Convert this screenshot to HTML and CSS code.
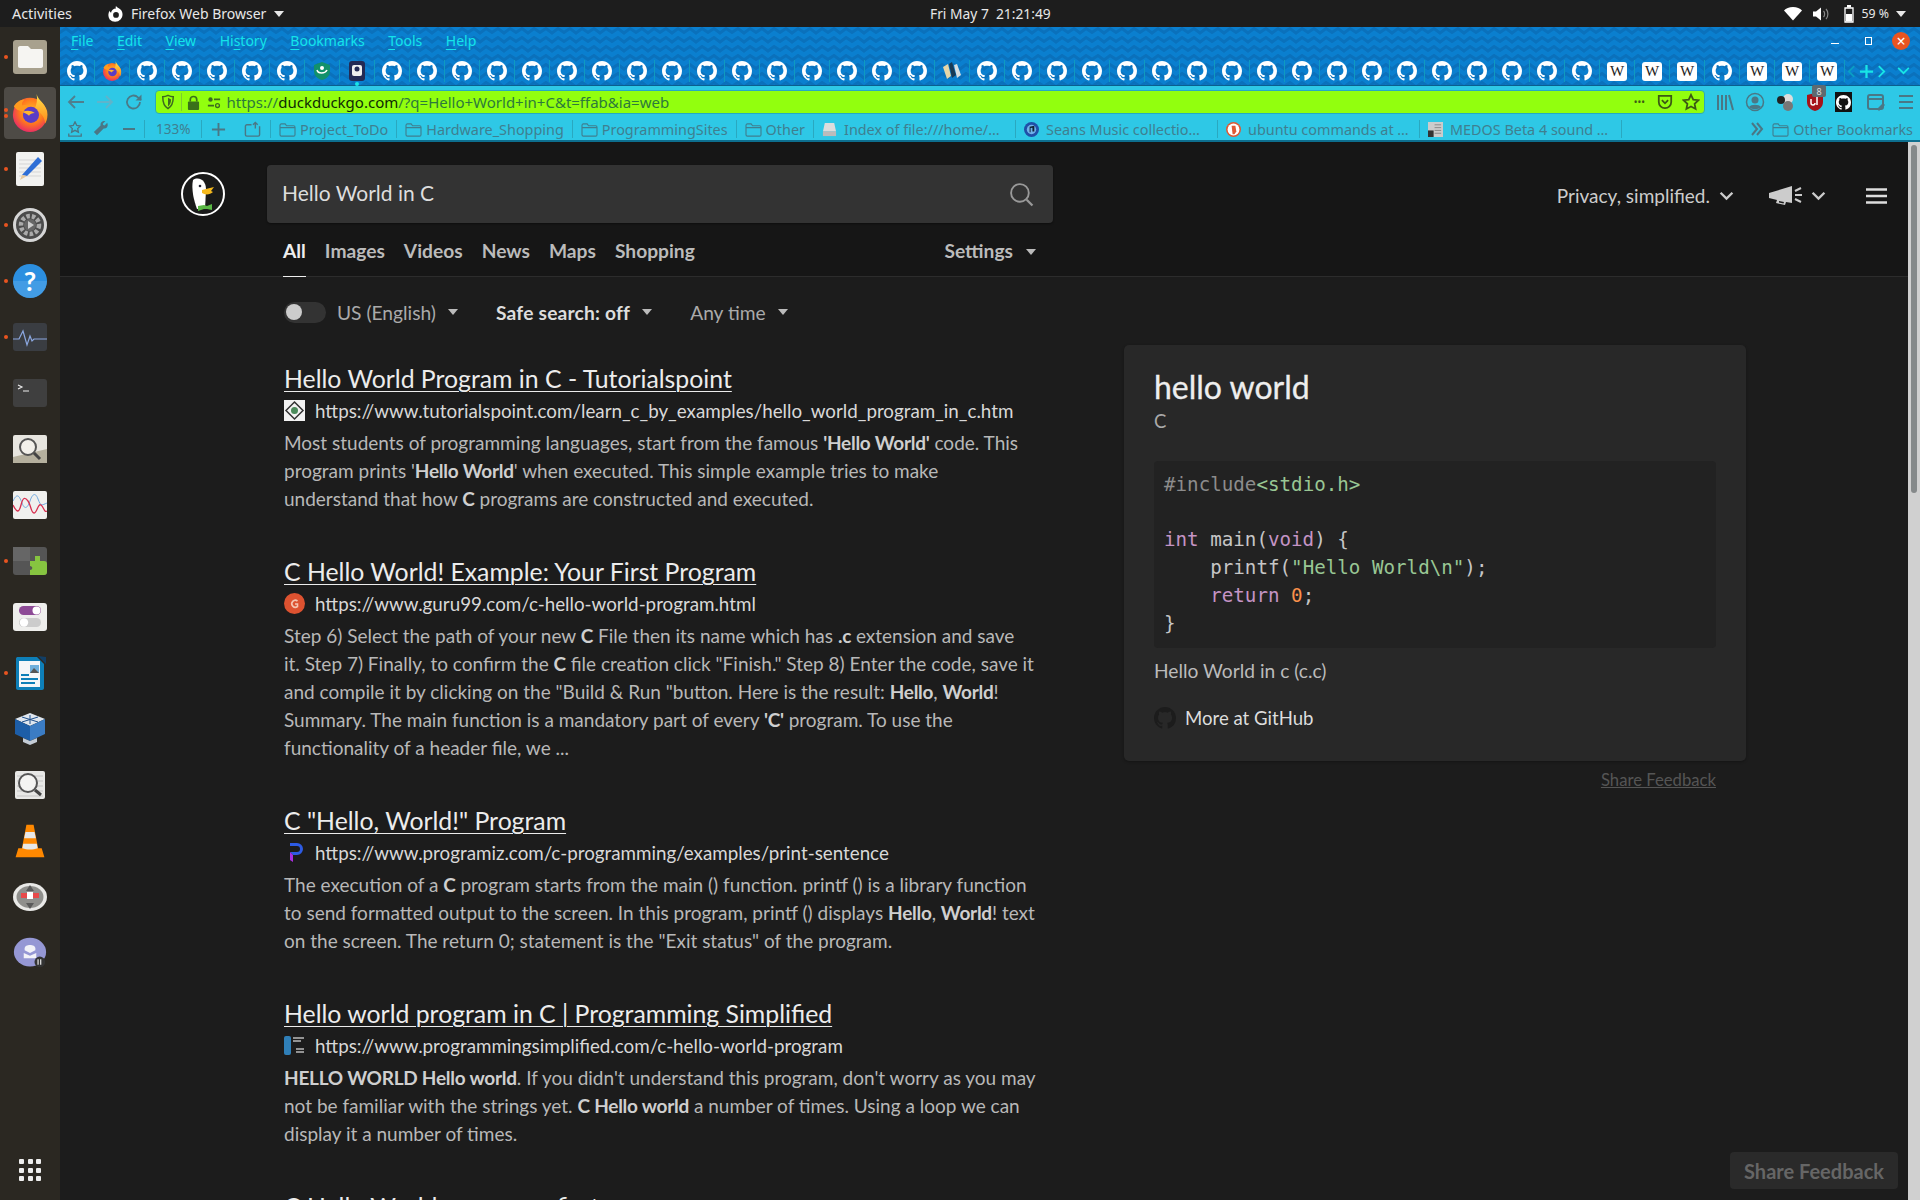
FILE: index.html
```html
<!DOCTYPE html>
<html lang="en">
<head>
<meta charset="utf-8">
<title>Hello World in C at DuckDuckGo</title>
<link rel="stylesheet" href="styles.css">
</head>
<body>
<svg class="defs" width="0" height="0" aria-hidden="true">
  <defs>
    <radialGradient id="ffg" cx="0.55" cy="0.4" r="0.7"><stop offset="0" stop-color="#ffbd2e"/><stop offset="0.5" stop-color="#ff7a1c"/><stop offset="1" stop-color="#e3127d"/></radialGradient>
    <linearGradient id="ffl" x1="0" y1="0" x2="0" y2="1"><stop offset="0" stop-color="#ffe14a"/><stop offset="1" stop-color="#ff8a1a"/></linearGradient>
    <symbol id="gh" viewBox="0 0 16 16"><path fill="currentColor" d="M8 0C3.58 0 0 3.58 0 8c0 3.54 2.29 6.53 5.47 7.59.4.07.55-.17.55-.38 0-.19-.01-.82-.01-1.49-2.01.37-2.53-.49-2.69-.94-.09-.23-.48-.94-.82-1.13-.28-.15-.68-.52-.01-.53.63-.01 1.08.58 1.23.82.72 1.21 1.87.87 2.33.66.07-.52.28-.87.51-1.07-1.78-.2-3.64-.89-3.64-3.95 0-.87.31-1.59.82-2.15-.08-.2-.36-1.02.08-2.12 0 0 .67-.21 2.2.82.64-.18 1.32-.27 2-.27.68 0 1.36.09 2 .27 1.53-1.04 2.2-.82 2.2-.82.44 1.1.16 1.92.08 2.12.51.56.82 1.27.82 2.15 0 3.07-1.87 3.75-3.65 3.95.29.25.54.73.54 1.48 0 1.07-.01 1.93-.01 2.2 0 .21.15.46.55.38A8.013 8.013 0 0016 8c0-4.42-3.58-8-8-8z"/></symbol>
    <symbol id="ff" viewBox="0 0 40 40"><circle cx="20" cy="22" r="18" fill="url(#ffg)"/><path d="M27 0c1 6 9 10 11 18 1 5 0 10-2 13-1-9-6-12-11-15 2-5 3-10 2-16z" fill="url(#ffl)"/><path d="M3 13c3-5 7-7 11-7-2 2-3 4-2 6 4-1 9 0 12 3l-8 3c-3 1-5 0-8-1-2 0-4-2-5-4z" fill="#ff9a1f"/><circle cx="21" cy="22" r="8.500" fill="#5b3cc4"/><path d="M12 19c4-2 9-2 13 1-3 0-5 1-6 3-2-2-5-3-7-4z" fill="#ffb52c"/></symbol>
    <symbol id="folder" viewBox="0 0 18 16"><path fill="none" stroke="currentColor" stroke-width="1.200" d="M1 3.500C1 2.700 1.600 2 2.500 2h4l1.500 2h7.500c.8 0 1.500.7 1.500 1.500v8c0 .8-.7 1.500-1.500 1.500h-13C1.700 15 1 14.300 1 13.500z M1 6h16"/></symbol>
    <symbol id="chev" viewBox="0 0 14 9"><path fill="none" stroke="currentColor" stroke-width="2.200" d="M1.500 1.500 7 7l5.500-5.500"/></symbol>
    <symbol id="caret" viewBox="0 0 10 6"><path fill="currentColor" d="M0 0h10L5 6z"/></symbol>
  </defs>
</svg>

<header class="topbar">
  <span class="top-activities">Activities</span>
  <span class="top-app">
    <svg class="top-app-ico" viewBox="0 0 20 20"><path fill="#fff" d="M10 1c1 2 3 2 5 4 3 3 3 8 0 11a8 8 0 0 1-12 0C1 13 1 9 3 6c0 1 .5 2 1.500 2.500C5 6 7 4 10 4c-.5-1-.5-2 0-3z"/><circle cx="10" cy="11" r="3.200" fill="#1d1d1d"/></svg>
    Firefox Web Browser
    <svg class="top-caret"><use href="#caret"/></svg>
  </span>
  <span class="top-clock">Fri May 7&nbsp; 21:21:49</span>
  <span class="top-status">
    <svg class="st-ico" viewBox="0 0 18 14"><path fill="#fff" d="M9 13.500 0 3.500C2 1.500 5 0 9 0s7 1.500 9 3.500z"/></svg>
    <svg class="st-ico" viewBox="0 0 18 14"><path fill="#fff" d="M1 4.500h3L9 .5v13l-5-4H1z"/><path fill="none" stroke="#888" stroke-width="1.200" d="M11.500 4c1.500 1.500 1.500 4.500 0 6M14 2c2.500 2.500 2.500 7.500 0 10"/></svg>
    <svg class="st-bat" viewBox="0 0 10 18"><path fill="none" stroke="#fff" stroke-width="1.300" d="M1 3h8v14H1z"/><path fill="#fff" d="M3 0h4v2.500H3zM2 9h6v7.500H2z"/></svg>
    <span class="st-pct">59 %</span>
    <svg class="top-caret"><use href="#caret"/></svg>
  </span>
</header>

<div class="desktop">
  <nav class="dock">
    <div class="dock-item has-dot"><svg viewBox="0 0 34 34"><rect width="34" height="34" rx="3" fill="#a8a18e"/><path fill="#f6f5f2" d="M5 8c0-1 .7-2 2-2h8l3 3h10c1.200 0 2 .800 2 2v15c0 1-.800 2-2 2H7c-1.300 0-2-1-2-2z"/></svg></div>
    <div class="dock-item active has-dot two"><svg class="dock-ff" viewBox="0 0 40 40"><use href="#ff"/></svg></div>
    <div class="dock-item has-dot"><svg viewBox="0 0 34 34"><rect x="3" width="28" height="34" rx="2" fill="#f2f2f0"/><path stroke="#d5d5d5" d="M6 8h22M6 12h22M6 16h22M6 20h22M6 24h22"/><path fill="#2f6fd6" d="M25 5l4 4-15 15-5-1z"/><path fill="#e8c99b" d="M9 23l5 1-7 4z"/></svg></div>
    <div class="dock-item has-dot"><svg viewBox="0 0 34 34"><circle cx="17" cy="17" r="15.500" fill="#4b4b4b" stroke="#d6d6d6" stroke-width="3"/><circle cx="17" cy="17" r="9" fill="none" stroke="#aaa" stroke-width="4.500" stroke-dasharray="3.500 2"/><circle cx="17" cy="17" r="6" fill="#666"/><path fill="#ccc" d="M15 13l6 4-6 4z"/></svg></div>
    <div class="dock-item has-dot"><svg viewBox="0 0 34 34"><circle cx="17" cy="17" r="17" fill="#2c8fe0"/><path fill="#58aaea" d="M0 17a17 17 0 0 0 34 0z" opacity=".5"/><text class="help-q" x="17" y="27" text-anchor="middle">?</text></svg></div>
    <div class="dock-item has-dot short"><svg viewBox="0 0 34 28"><rect width="34" height="28" rx="3" fill="#3a3d42"/><path fill="none" stroke="#8ba7e0" stroke-width="1.200" d="M0 16h6l4-8 4 14 3-9 2 5 2-2h13"/></svg></div>
    <div class="dock-item short"><svg viewBox="0 0 34 28"><rect width="34" height="28" rx="3" fill="#3f3f3f"/><path fill="none" stroke="#eee" stroke-width="1.100" d="M5 6l4 2-4 2M10 12h6"/></svg></div>
    <div class="dock-item short"><svg viewBox="0 0 34 28"><rect width="34" height="28" rx="2" fill="#e7e5df"/><path fill="#b5b09e" d="M0 22l34-8v14H0z"/><circle cx="15" cy="12" r="8" fill="#f2f0ea" stroke="#555" stroke-width="2"/><path stroke="#444" stroke-width="3" d="M21 18l6 6"/></svg></div>
    <div class="dock-item short"><svg viewBox="0 0 34 28"><rect width="34" height="28" rx="2" fill="#f0f0ee"/><path fill="none" stroke="#6ea8e0" stroke-width="1" d="M0 10c4-8 6-6 9 2s6 4 8-2 5-10 8-2 4 6 9 4"/><path fill="none" stroke="#d73050" stroke-width="1.300" d="M0 14c4 8 6 8 8 0s4-8 7-4 3 12 6 12 4-10 7-8 3 8 6 6"/></svg></div>
    <div class="dock-item has-dot short"><svg viewBox="0 0 34 28"><rect width="34" height="28" rx="3" fill="#555"/><path fill="#666" d="M0 0h17v14H0z"/><path fill="#86c440" d="M17 14h14c2 0 3 1 3 3v8c0 2-1 3-3 3H17v-5c3 0 3-4 0-4zM22 9h5v5h-5z"/></svg></div>
    <div class="dock-item short"><svg viewBox="0 0 34 28"><rect width="34" height="28" rx="3" fill="#eeeeec"/><rect x="6" y="3" width="22" height="9" rx="4.500" fill="#8d4a96"/><circle cx="23.500" cy="7.500" r="4" fill="#fff"/><rect x="6" y="15" width="22" height="9" rx="4.500" fill="#ccc"/><circle cx="11" cy="19.500" r="4.200" fill="#fff"/></svg></div>
    <div class="dock-item has-dot"><svg viewBox="0 0 34 34"><path fill="#0e7fb8" d="M3 3c0-1.500.8-2 2-2h19l7 7v24c0 1-.800 2-2 2H5c-1.200 0-2-1-2-2z"/><path fill="#123f66" d="M25 0l8 1v7z"/><rect x="6" y="5" width="21" height="26" fill="#f4f6f8"/><path stroke="#0e7fb8" stroke-width="1.800" d="M8 19h8M8 23h17M8 27h14"/><rect x="17" y="9" width="9" height="8" fill="#6fb0dc"/><path fill="#555" d="M17 17l4-5 5 5z"/></svg></div>
    <div class="dock-item"><svg viewBox="0 0 34 34"><path fill="#dfe6ef" d="M17 1l15 6-15 7L2 7z"/><path fill="#1d5ea8" d="M2 7l15 7v15L2 22z"/><path fill="#3b7cc4" d="M32 7l-15 7v15l15-7z"/><path fill="#c4ccd6" d="M10 26l7 3 7-3v4l-7 3-7-3z"/><path stroke="#1d4f8c" d="M17 3v9M9 5l16 5M25 5L9 10"/></svg></div>
    <div class="dock-item short"><svg viewBox="0 0 34 28"><rect x="2" width="30" height="28" rx="2" fill="#e8e8e6"/><path stroke="#c4c4c4" d="M4 5h26M4 10h26M4 15h26M4 20h26M4 25h26"/><circle cx="15" cy="12" r="9" fill="#f4f4f2" stroke="#555" stroke-width="2"/><path stroke="#444" stroke-width="3" d="M22 19l6 5"/></svg></div>
    <div class="dock-item dock-cone"><svg viewBox="0 0 34 40"><path fill="#ff8800" d="M13 2h8l5 26h4l3 10H1l3-10h4z"/><path fill="#e8e8e8" d="M12 10h10l1.500 7h-13zM9.500 23h15l1 5c-5 2-12 2-17 0z"/></svg></div>
    <div class="dock-item short"><svg viewBox="0 0 34 28"><ellipse cx="17" cy="14" rx="17" ry="14" fill="#e9e9e7"/><ellipse cx="17" cy="14" rx="13.500" ry="11" fill="#8f8f8c"/><path fill="#5a5a5a" d="M17 2l4 6h-8zM17 26l4-6h-8z"/><rect x="8" y="10" width="18" height="5" fill="#e84a4a"/><rect x="14" y="9" width="6" height="7" fill="#fff"/></svg></div>
    <div class="dock-item"><svg viewBox="0 0 38 34"><ellipse cx="19" cy="16" rx="18" ry="16" fill="#9597d4"/><path fill="#f2f2f8" d="M13 12c0-3 3-4 6-4s6 1 6 4v2l-6 3-6-3z"/><path fill="#f2f2f8" d="M12 17l7 3 7-3v6H12z"/><circle cx="30" cy="27" r="6" fill="#333"/><path stroke="#fff" stroke-width="1.200" d="M28 24v6M31 24v6"/></svg></div>
    <div class="dock-grid"><i></i><i></i><i></i><i></i><i></i><i></i><i></i><i></i><i></i></div>
  </nav>

  <main class="browser">
    <div class="chrome-top">
      <div class="menubar">
        <span class="menu"><u>F</u>ile</span>
        <span class="menu"><u>E</u>dit</span>
        <span class="menu"><u>V</u>iew</span>
        <span class="menu">Hi<u>s</u>tory</span>
        <span class="menu"><u>B</u>ookmarks</span>
        <span class="menu"><u>T</u>ools</span>
        <span class="menu"><u>H</u>elp</span>
        <span class="win-ctrls">
          <i class="win-min"></i>
          <i class="win-max"></i>
          <span class="win-close">×</span>
        </span>
      </div>
      <div class="tabbar">
        <div class="tab"><svg class="tg"><use href="#gh"/></svg></div>
        <div class="tab"><svg class="tg" viewBox="0 0 40 40"><use href="#ff"/></svg></div>
        <div class="tab"><svg class="tg"><use href="#gh"/></svg></div>
        <div class="tab"><svg class="tg"><use href="#gh"/></svg></div>
        <div class="tab"><svg class="tg"><use href="#gh"/></svg></div>
        <div class="tab"><svg class="tg"><use href="#gh"/></svg></div>
        <div class="tab"><svg class="tg"><use href="#gh"/></svg></div>
        <div class="tab"><svg class="tg" viewBox="0 0 20 20"><path fill="#12916b" d="M10 1l8 3v6c0 5-4 8-8 9-4-1-8-4-8-9V4z"/><circle cx="10" cy="7" r="2" fill="#fff"/><path fill="none" stroke="#fff" stroke-width="1.500" d="M5 9c1 4 8 4 10 0"/></svg></div>
        <div class="tab tab-current"><svg class="tg" viewBox="0 0 20 20"><rect x="2" width="16" height="20" rx="3" fill="#232a54"/><rect x="5" y="4" width="10" height="11" rx="2" fill="#eee"/><circle cx="10" cy="8" r="2.500" fill="#232a54"/></svg></div>
        <div class="tab"><svg class="tg"><use href="#gh"/></svg></div>
        <div class="tab"><svg class="tg"><use href="#gh"/></svg></div>
        <div class="tab"><svg class="tg"><use href="#gh"/></svg></div>
        <div class="tab"><svg class="tg"><use href="#gh"/></svg></div>
        <div class="tab"><svg class="tg"><use href="#gh"/></svg></div>
        <div class="tab"><svg class="tg"><use href="#gh"/></svg></div>
        <div class="tab"><svg class="tg"><use href="#gh"/></svg></div>
        <div class="tab"><svg class="tg"><use href="#gh"/></svg></div>
        <div class="tab"><svg class="tg"><use href="#gh"/></svg></div>
        <div class="tab"><svg class="tg"><use href="#gh"/></svg></div>
        <div class="tab"><svg class="tg"><use href="#gh"/></svg></div>
        <div class="tab"><svg class="tg"><use href="#gh"/></svg></div>
        <div class="tab"><svg class="tg"><use href="#gh"/></svg></div>
        <div class="tab"><svg class="tg"><use href="#gh"/></svg></div>
        <div class="tab"><svg class="tg"><use href="#gh"/></svg></div>
        <div class="tab"><svg class="tg"><use href="#gh"/></svg></div>
        <div class="tab"><svg class="tg" viewBox="0 0 20 20"><path fill="#e6d6a8" d="M1 6l5-3 3 12-4 3z"/><path fill="#1a3a55" d="M7 3l3-2 4 13-4 3z"/><path fill="#d8dde0" d="M12 4l3-1 4 11-4 3z"/></svg></div>
        <div class="tab"><svg class="tg"><use href="#gh"/></svg></div>
        <div class="tab"><svg class="tg"><use href="#gh"/></svg></div>
        <div class="tab"><svg class="tg"><use href="#gh"/></svg></div>
        <div class="tab"><svg class="tg"><use href="#gh"/></svg></div>
        <div class="tab"><svg class="tg"><use href="#gh"/></svg></div>
        <div class="tab"><svg class="tg"><use href="#gh"/></svg></div>
        <div class="tab"><svg class="tg"><use href="#gh"/></svg></div>
        <div class="tab"><svg class="tg"><use href="#gh"/></svg></div>
        <div class="tab"><svg class="tg"><use href="#gh"/></svg></div>
        <div class="tab"><svg class="tg"><use href="#gh"/></svg></div>
        <div class="tab"><svg class="tg"><use href="#gh"/></svg></div>
        <div class="tab"><svg class="tg"><use href="#gh"/></svg></div>
        <div class="tab"><svg class="tg"><use href="#gh"/></svg></div>
        <div class="tab"><svg class="tg"><use href="#gh"/></svg></div>
        <div class="tab"><svg class="tg"><use href="#gh"/></svg></div>
        <div class="tab"><svg class="tg"><use href="#gh"/></svg></div>
        <div class="tab"><svg class="tg"><use href="#gh"/></svg></div>
        <div class="tab"><svg class="tg"><use href="#gh"/></svg></div>
        <div class="tab"><span class="wiki">W</span></div>
        <div class="tab"><span class="wiki">W</span></div>
        <div class="tab"><span class="wiki">W</span></div>
        <div class="tab"><svg class="tg"><use href="#gh"/></svg></div>
        <div class="tab"><span class="wiki">W</span></div>
        <div class="tab"><span class="wiki">W</span></div>
        <div class="tab"><span class="wiki">W</span></div>
        <div class="tab-ctrls">
          <svg viewBox="0 0 10 16" class="tc-n"><path fill="none" stroke="#0a9fc4" stroke-width="2" d="M8 2 2 8l6 6"/></svg>
          <svg viewBox="0 0 16 16" class="tc-p"><path fill="none" stroke="#18e6e6" stroke-width="2.400" d="M8 1v14M1 8h14"/></svg>
          <svg viewBox="0 0 10 16" class="tc-n"><path fill="none" stroke="#18e6e6" stroke-width="2" d="M2 2l6 6-6 6"/></svg>
          <svg viewBox="0 0 14 9" class="tc-d"><path fill="none" stroke="#18e6e6" stroke-width="2" d="M1 1l6 6 6-6"/></svg>
        </div>
      </div>
    </div>

    <div class="navbar">
      <div class="nav-btns">
        <svg class="nb" viewBox="0 0 18 18"><path fill="none" stroke="#4f7f8e" stroke-width="1.800" d="M17 9H2M8 3 2 9l6 6"/></svg>
        <svg class="nb" viewBox="0 0 18 18"><path fill="none" stroke="#5fb4cb" stroke-width="1.800" d="M1 9h15M10 3l6 6-6 6"/></svg>
        <svg class="nb" viewBox="0 0 18 18"><path fill="none" stroke="#4a7a88" stroke-width="1.800" d="M15 9a6.500 6.500 0 1 1-2-4.700L16 7"/><path fill="#4a7a88" d="M16.500 1.500v6h-6z"/></svg>
      </div>
      <div class="urlbar">
        <svg class="ub-shield" viewBox="0 0 16 18"><path fill="none" stroke="#3d6a1f" stroke-width="1.700" d="M8 1.500c2 1 4 1.500 6 1.500 0 7-1.500 11-6 13.500C3.500 14 2 10 2 3c2 0 4-.5 6-1.500z"/><path fill="#3d6a1f" d="M8 4v10c2-1.500 3.500-4 3.500-8z"/></svg>
        <i class="ub-sep"></i>
        <svg class="ub-lock" viewBox="0 0 14 16"><path fill="none" stroke="#39701a" stroke-width="1.800" d="M3.500 7V5a3.500 3.500 0 0 1 7 0v2"/><rect x="1" y="7" width="12" height="9" rx="1" fill="#39701a"/></svg>
        <svg class="ub-perm" viewBox="0 0 16 14"><circle cx="4" cy="3.500" r="2.500" fill="#3d6a1f"/><path stroke="#3d6a1f" stroke-width="2" d="M8 3.500h7M1 10.500h7"/><circle cx="12" cy="10.500" r="2.200" fill="none" stroke="#3d6a1f" stroke-width="1.500"/></svg>
        <span class="url"><span class="url-dim">https://</span>duckduckgo.com<span class="url-dim">/?q=Hello+World+in+C&amp;t=ffab&amp;ia=web</span></span>
        <span class="ub-dots">•••</span>
        <svg class="ub-pocket" viewBox="0 0 18 18"><path fill="none" stroke="#3c5a14" stroke-width="2" d="M2 2h14v7a7 7 0 0 1-14 0z"/><path fill="none" stroke="#3c5a14" stroke-width="2" d="M5.500 7 9 10.500 12.500 7"/></svg>
        <svg class="ub-star" viewBox="0 0 20 20"><path fill="none" stroke="#3c5a14" stroke-width="2" d="M10 2l2.500 5.300 5.700.7-4.200 4 1.100 5.700L10 15l-5.100 2.700L6 12 1.800 8l5.700-.7z"/></svg>
      </div>
      <div class="nav-right">
        <svg class="nr" viewBox="0 0 20 20"><path stroke="#4a7785" stroke-width="2" d="M3 3v15M7 3v15M11 3v15M14 3l4 15"/></svg>
        <svg class="nr" viewBox="0 0 20 20"><circle cx="10" cy="10" r="8.500" fill="none" stroke="#4a7785" stroke-width="1.500"/><circle cx="10" cy="8" r="3.500" fill="#4a7785"/><path fill="#4a7785" d="M4 15c2-3 10-3 12 0-3 3-9 3-12 0z"/></svg>
        <svg class="nr" viewBox="0 0 20 20"><circle cx="13" cy="7" r="5" fill="#ddd"/><circle cx="6" cy="8" r="4" fill="#222"/><circle cx="13" cy="14" r="5" fill="#777"/></svg>
        <span class="ublock"><svg class="nr" viewBox="0 0 20 20"><path fill="#a6131a" d="M10 1l8 2v7c0 5-4 8-8 9-4-1-8-4-8-9V3z"/><path stroke="#fff" stroke-width="1.500" fill="none" d="M6 7v4a2 2 0 0 0 4 0M12 5v8"/></svg><b class="badge">8</b></span>
        <span class="gh-ext"><svg class="gh-ext-ico"><use href="#gh"/></svg></span>
        <svg class="nr" viewBox="0 0 20 20"><rect x="2" y="3" width="15" height="14" rx="2" fill="none" stroke="#4a7785" stroke-width="2"/><path stroke="#4a7785" stroke-width="2" d="M2 7h15"/><path fill="#4a7785" d="M11 17l6-6 2 2-6 6z"/></svg>
        <svg class="nr" viewBox="0 0 20 20"><path stroke="#4a7785" stroke-width="2" d="M3 4h14M3 10h14M3 16h14"/></svg>
      </div>
    </div>

    <div class="bookbar">
      <svg class="bi" viewBox="0 0 18 18"><path fill="none" stroke="#4a7785" stroke-width="1.500" d="M9 1l2 4 4 .6-3 3 .8 4L9 10.500 5.200 12.600l.8-4-3-3L7 5zM2 14v3h14v-3"/></svg>
      <svg class="bi bi-wrench" viewBox="0 0 18 18"><path fill="#4a7785" d="M16 2l-3 3-1.500-.5L11 3l3-3c-3-.5-6 1-5.500 5L1 12.500 4.500 16 12 8.500c4 .500 5.500-3 4-6.500z"/></svg>
      <i class="zoom-minus"></i>
      <i class="bb-sep"></i>
      <span class="zoom-val">133%</span>
      <i class="bb-sep"></i>
      <svg class="bi bi-plus" viewBox="0 0 16 16"><path stroke="#4a7785" stroke-width="2" d="M8 1v14M1 8h14"/></svg>
      <svg class="bi bi-share" viewBox="0 0 18 18"><path fill="none" stroke="#4a7785" stroke-width="1.500" d="M8 4H3a1.500 1.500 0 0 0-1.500 1.500v9A1.500 1.500 0 0 0 3 16h12a1.500 1.500 0 0 0 1.500-1.500v-9M12 8V1.500M9.500 4 12 1.500 14.500 4"/></svg>
      <i class="bb-sep"></i>
      <span class="bm"><svg class="bm-f"><use href="#folder"/></svg>Project_ToDo</span>
      <span class="bm"><svg class="bm-f"><use href="#folder"/></svg>Hardware_Shopping</span>
      <span class="bm"><svg class="bm-f"><use href="#folder"/></svg>ProgrammingSites</span>
      <span class="bm"><svg class="bm-f"><use href="#folder"/></svg>Other</span>
      <span class="bm"><svg class="bm-i" viewBox="0 0 16 16"><path fill="#ddd" d="M3 1h10l2 9H1z"/><rect x="1" y="10" width="14" height="5" fill="#bbb"/></svg><span class="bm-label">Index of file:///home/…</span></span>
      <span class="bm"><svg class="bm-i" viewBox="0 0 16 16"><circle cx="8" cy="8" r="8" fill="#1f4fa8"/><circle cx="8" cy="8" r="5" fill="#6fb2ea"/><path fill="#123" d="M6 11V5l5-1v6H9V6l-2 .5V11z"/></svg><span class="bm-label">Seans Music collectio…</span></span>
      <span class="bm"><svg class="bm-i" viewBox="0 0 16 16"><circle cx="8" cy="8" r="8" fill="#de5833"/><circle cx="8" cy="8" r="6.300" fill="#fff"/><path fill="#de5833" d="M6 4h4l1 6-2 3H7z"/></svg><span class="bm-label">ubuntu commands at …</span></span>
      <span class="bm"><svg class="bm-i" viewBox="0 0 16 16"><rect width="16" height="16" fill="#ccc"/><rect y="9" width="6" height="7" fill="#333"/><path stroke="#888" d="M7 3h7M7 6h7M7 9h7M7 12h7"/></svg><span class="bm-label">MEDOS Beta 4 sound …</span></span>
      <span class="bb-more">
        <svg class="bi-more" viewBox="0 0 14 14"><path fill="none" stroke="#4a7785" stroke-width="2" d="M2 1l5 6-5 6M7 1l5 6-5 6"/></svg>
        <span class="bm bm-last"><svg class="bm-f"><use href="#folder"/></svg>Other Bookmarks</span>
      </span>
    </div>

    <div class="page">
      <div class="page-scroll">
        <div class="ddg-head">
          <div class="ddg-head-top">
            <svg class="ddg-logo" viewBox="0 0 44 44">
              <circle cx="22" cy="22" r="21" fill="#1a1a1a" stroke="#fff" stroke-width="2"/>
              <path fill="#fff" d="M12 8c4-3 9-1 11 2 2 3 2 6 2 9l-1 17-8 1c-3-8-6-20-4-29z"/>
              <circle cx="19" cy="14" r="1.300" fill="#223"/>
              <path fill="#f5b91e" d="M21 18c4-1 8-2 12-3l-3 4 2 1c-3 3-8 3-11 1z"/>
              <path fill="#5ab845" d="M17 34l6-1 3 1 5-2v6l-5-1-3 0-6 2z"/>
            </svg>
            <div class="ddg-search">
              <span>Hello World in C</span>
              <svg class="search-ico" viewBox="0 0 24 24"><circle cx="10.500" cy="10.500" r="8.500" fill="none" stroke="#999" stroke-width="1.800"/><path stroke="#999" stroke-width="2.200" d="M17 17l5.500 5.500"/></svg>
            </div>
            <div class="ddg-tools">
              <span class="tool-priv">Privacy, simplified.</span>
              <svg class="tool-chev"><use href="#chev"/></svg>
              <svg class="tool-mega" viewBox="0 0 34 22"><path fill="#ccc" d="M1 8l23-7v17l-6-1-1 3-9-2 1-3-8-2z"/><path fill="#1a1a1a" d="M11 16l5 1-.5 1.500-4.500-1z"/><path stroke="#ccc" stroke-width="2" d="M27 6l6-3M27 10h7M27 14l6 3"/></svg>
              <svg class="tool-chev tool-chev2"><use href="#chev"/></svg>
              <svg class="tool-menu" viewBox="0 0 21 16"><path stroke="#ddd" stroke-width="2.400" d="M0 1.500h21M0 8h21M0 14.500h21"/></svg>
            </div>
          </div>
          <div class="ddg-nav">
            <span class="dn active">All</span>
            <span class="dn">Images</span>
            <span class="dn">Videos</span>
            <span class="dn">News</span>
            <span class="dn">Maps</span>
            <span class="dn">Shopping</span>
            <span class="dn dn-settings">Settings <svg class="fl-caret"><use href="#caret"/></svg></span>
          </div>
        </div>

        <div class="ddg-body">
          <div class="results">
            <div class="filters">
              <span class="toggle"><i></i></span>
              <span class="fl">US (English) <svg class="fl-caret"><use href="#caret"/></svg></span>
              <span class="fl fl-strong">Safe search: off <svg class="fl-caret"><use href="#caret"/></svg></span>
              <span class="fl">Any time <svg class="fl-caret"><use href="#caret"/></svg></span>
            </div>

            <article class="result">
              <h2 class="r-title">Hello World Program in C - Tutorialspoint</h2>
              <div class="r-url">
                <svg class="fav" viewBox="0 0 21 21"><rect width="21" height="21" fill="#f2f2f2"/><path fill="none" stroke="#333" stroke-width="1.500" d="M10.500 2 19 10.500 10.500 19 2 10.500z"/><circle cx="10.500" cy="10.500" r="3.500" fill="#4a8a5a"/></svg>
                https://www.tutorialspoint.com/learn_c_by_examples/hello_world_program_in_c.htm
              </div>
              <p class="r-snip">Most students of programming languages, start from the famous <b>'Hello World'</b> code. This<br>program prints '<b>Hello World</b>' when executed. This simple example tries to make<br>understand that how <b>C</b> programs are constructed and executed.</p>
            </article>

            <article class="result">
              <h2 class="r-title">C Hello World! Example: Your First Program</h2>
              <div class="r-url">
                <svg class="fav" viewBox="0 0 21 21"><circle cx="10.500" cy="10.500" r="10.500" fill="#dd5230"/><path fill="none" stroke="#f4c4b0" stroke-width="1.600" d="M13.500 8a3.500 3.500 0 1 0 0 5.500v-2.500h-2.500"/></svg>
                https://www.guru99.com/c-hello-world-program.html
              </div>
              <p class="r-snip">Step 6) Select the path of your new <b>C</b> File then its name which has <b>.c</b> extension and save<br>it. Step 7) Finally, to confirm the <b>C</b> file creation click "Finish." Step 8) Enter the code, save it<br>and compile it by clicking on the "Build &amp; Run "button. Here is the result: <b>Hello</b>, <b>World</b>!<br>Summary. The main function is a mandatory part of every <b>'C'</b> program. To use the<br>functionality of a header file, we ...</p>
            </article>

            <article class="result">
              <h2 class="r-title">C "Hello, World!" Program</h2>
              <div class="r-url">
                <svg class="fav" viewBox="0 0 21 21"><path fill="#2d5be3" d="M6 1h7a6 6 0 0 1 0 12H9l-3-3h7a3 3 0 0 0 0-6H6z"/><path fill="#a92ee0" d="M6 10l3 3v7l-3-2z"/></svg>
                https://www.programiz.com/c-programming/examples/print-sentence
              </div>
              <p class="r-snip">The execution of a <b>C</b> program starts from the main () function. printf () is a library function<br>to send formatted output to the screen. In this program, printf () displays <b>Hello</b>, <b>World</b>! text<br>on the screen. The return 0; statement is the "Exit status" of the program.</p>
            </article>

            <article class="result">
              <h2 class="r-title">Hello world program in C | Programming Simplified</h2>
              <div class="r-url">
                <svg class="fav" viewBox="0 0 21 21"><rect x="0" y="1" width="7" height="19" rx="2" fill="#2f7fb8"/><path stroke="#bbb" stroke-width="1.500" d="M9 3h11M9 6h8M12 14h8M12 17h8"/></svg>
                https://www.programmingsimplified.com/c-hello-world-program
              </div>
              <p class="r-snip"><b>HELLO WORLD Hello world</b>. If you didn't understand this program, don't worry as you may<br>not be familiar with the strings yet. <b>C Hello world</b> a number of times. Using a loop we can<br>display it a number of times.</p>
            </article>

            <article class="result">
              <h2 class="r-title">C Hello World program - first</h2>
            </article>
          </div>

          <aside class="side">
            <section class="card">
              <h2 class="card-title">hello world</h2>
              <div class="card-sub">C</div>
<pre class="code"><span class="c-pre">#include</span><span class="c-str">&lt;stdio.h&gt;</span>

<span class="c-kw">int</span> main(<span class="c-kw">void</span>) {
    printf(<span class="c-str">"Hello World\n"</span>);
    <span class="c-kw">return</span> <span class="c-num">0</span>;
}</pre>
              <p class="card-desc">Hello World in c (c.c)</p>
              <div class="card-more"><svg class="card-gh"><use href="#gh"/></svg>More at GitHub</div>
            </section>
            <div class="side-fb"><span>Share Feedback</span></div>
          </aside>
        </div>
        <button class="fb-btn">Share Feedback</button>
      </div>
      <div class="scrollbar"><i></i></div>
    </div>
  </main>
</div>
</body>
</html>
```
FILE: styles.css
```css
* { box-sizing: border-box; }
html, body { margin: 0; padding: 0; height: 100%; overflow: hidden; }
body {
  width: 1920px; height: 1200px; display: flex; flex-direction: column;
  background: #1c1c1c; font-family: "Noto Sans", sans-serif; color: #ddd;
}
.defs { position: absolute; }
svg { display: block; flex: none; }

/* top bar */
.topbar {
  height: 27px; background: #1d1d1d; color: #e8e8e8; display: flex; align-items: center;
  position: relative; font-size: 14px; flex: none;
}
.top-activities { margin-left: 12px; font-size: 14.400px; }
.top-app { margin-left: 35px; display: flex; align-items: center; gap: 6px; }
.top-app-ico { width: 18px; height: 18px; }
.top-caret { width: 10px; height: 6px; color: #e8e8e8; margin-left: 2px; }
.top-clock { position: absolute; left: 930px; font-size: 13.800px; }
.top-status { margin-left: auto; margin-right: 14px; display: flex; align-items: center; }
.st-ico { width: 18px; height: 14px; margin-right: 10px; }
.st-bat { width: 10px; height: 18px; margin-left: 4px; margin-right: 8px; }
.st-pct { margin-right: 5px; font-size: 12.300px; }

.desktop { flex: 1; display: flex; min-height: 0; }

/* dock */
.dock {
  width: 60px; flex: none; background: #2b2822; display: flex; flex-direction: column;
  align-items: center; padding-top: 4px; position: relative;
}
.dock-item {
  width: 52px; height: 52px; margin-bottom: 4px; display: flex; align-items: center; justify-content: center;
  position: relative; flex: none; border-radius: 4px;
}
.dock-item svg { width: 34px; height: 34px; }
.dock-item.short svg { height: 28px; }
.dock-item .dock-ff { width: 38px; height: 38px; }
.dock-cone svg { height: 36px; }
.dock-item.active { background: #4e4b46; }
.help-q { font: 700 27px Lato, sans-serif; fill: #fff; }
.has-dot::before {
  content: ""; position: absolute; left: 0; top: 24px; width: 4px; height: 4px; border-radius: 50%; background: #e95420;
}
.two::before { top: 21px; box-shadow: 0 6px 0 #e95420; }
.dock-grid {
  position: absolute; left: 19px; top: 1132px; width: 22px; height: 22px;
  display: grid; grid-template-columns: repeat(3, 5px); grid-auto-rows: 5px; gap: 3.500px;
}
.dock-grid i { background: #eee; border-radius: 1px; }

/* browser chrome */
.browser { flex: 1; min-width: 0; display: flex; flex-direction: column; }
.chrome-top {
  height: 59px; flex: none; background-color: #0a7fcf;
  background-image: url("data:image/svg+xml,%3Csvg xmlns='http://www.w3.org/2000/svg' width='24' height='9'%3E%3Cpath d='M-1 6 6 1.500 12 6 18 1.500 25 6' fill='none' stroke='%230a71bc' stroke-width='3'/%3E%3C/svg%3E");
  border-bottom: 1px solid #0a5f8f;
}
.menubar { height: 27px; display: flex; align-items: center; padding-left: 11px; gap: 23.500px; color: #14e4ea; font-size: 14px; }
.menu u { text-underline-offset: 3px; }
.win-ctrls { margin-left: auto; display: flex; align-items: center; margin-right: 10px; }
.win-min { width: 8px; height: 1px; background: #fff; margin-right: 26px; margin-top: 6px; }
.win-max { width: 7px; height: 8px; border: 1px solid #fff; margin-right: 20px; }
.win-close {
  width: 18px; height: 18px; border-radius: 50%; background: #e95420; color: #fff; display: flex;
  align-items: center; justify-content: center; font-size: 16px; line-height: 1;
}
.tabbar { height: 31px; padding-top: 3px; display: flex; align-items: center; position: relative; }
.tab {
  width: 35px; height: 22px; flex: none; display: flex; align-items: center; justify-content: center;
  border-right: 1px solid #0f9ac0; color: #fff; position: relative;
}
.tab:last-of-type { border-right: 0; }
.tg { width: 20px; height: 20px; }
.tab-current::after {
  content: ""; position: absolute; left: 15px; bottom: -4px; width: 4px; height: 4px; border-radius: 50%; background: #18e6e6;
}
.wiki {
  width: 20px; height: 19px; background: #fff; border-radius: 3px; color: #222; font: 15px "Liberation Serif", serif;
  display: flex; align-items: center; justify-content: center;
}
.tab-ctrls { display: flex; align-items: center; margin-left: 2px; gap: 3px; }
.tc-n { width: 9px; height: 15px; }
.tc-p { width: 15px; height: 15px; }
.tc-d { width: 13px; height: 8px; margin-left: 8px; }

.navbar { height: 29px; padding-top: 3px; flex: none; background: #2ec8e6; display: flex; align-items: center; }
.nav-btns { display: flex; width: 95px; padding-left: 7px; gap: 11px; align-items: center; flex: none; }
.nb { width: 18px; height: 18px; }
.urlbar {
  width: 1550px; height: 24px; background: #92ff0e; border: 1px solid #27a9c2; border-radius: 4px;
  display: flex; align-items: center; padding-left: 5px; padding-right: 4px; flex: none;
}
.ub-shield { width: 14px; height: 16px; }
.ub-sep { width: 1px; height: 18px; background: #7ecc30; margin: 0 5.500px; }
.ub-lock { width: 13px; height: 15px; }
.ub-perm { width: 14px; height: 13px; margin-left: 7px; }
.url { margin-left: 5.500px; font-size: 15px; color: #0e2b05; white-space: nowrap; }
.url-dim { color: #2c7a3c; }
.ub-dots { margin-left: auto; font-size: 10px; letter-spacing: 0; color: #3c5a14; }
.ub-pocket { width: 16px; height: 16px; margin-left: 12px; }
.ub-star { width: 18px; height: 18px; margin-left: 9px; }
.nav-right { display: flex; align-items: center; flex: 1; padding-left: 10px; gap: 10px; }
.nr { width: 20px; height: 20px; }
.ublock { position: relative; display: block; }
.badge {
  position: absolute; left: 7px; top: -7px; background: #5f6a70; color: #ddd; font-size: 9px; font-weight: 400;
  width: 14px; height: 12px; display: flex; align-items: center; justify-content: center; border-radius: 2px;
}
.gh-ext { width: 17px; height: 20px; background: #111; color: #fff; display: flex; align-items: center; justify-content: center; margin-right: 4px; }
.gh-ext-ico { width: 15px; height: 15px; }

.bookbar {
  height: 27px; flex: none; background: #2ec8e6; display: flex; align-items: center; padding: 3px 0 0 7px;
  border-bottom: 2px solid #0d6f8f; color: #3f7f90; font-size: 14.400px; white-space: nowrap;
}
.bi { width: 16px; height: 16px; }
.bi-wrench { margin-left: 10px; }
.zoom-minus { width: 12px; height: 2px; background: #4a7785; margin-left: 14px; }
.bb-sep { width: 1px; height: 18px; background: #2aa8c0; margin-left: 9px; }
.zoom-val { width: 36px; margin-left: 11px; color: #3f7f90; font-size: 13.500px; }
.bi-plus { margin-left: 9px; width: 15px; height: 15px; }
.bi-share { margin-left: 18px; width: 17px; height: 17px; }
.bm { display: flex; align-items: center; margin-left: 8px; padding-right: 8px; border-right: 1px solid #2aa8c0; height: 18px; }
.bm-f { width: 17px; height: 15px; margin-right: 4px; color: #3f7f90; }
.bm-i { width: 15px; height: 15px; margin-right: 7px; }
.bm-label { width: 163px; }
.bb-more { margin-left: auto; display: flex; align-items: center; padding-right: 7px; }
.bi-more { width: 14px; height: 14px; }
.bm-last { border: 0; padding: 0; margin-left: 8px; }

/* page */
.page { flex: 1; min-height: 0; display: flex; background: #1c1c1c; }
.page-scroll { flex: 1; min-width: 0; overflow: hidden; position: relative; font-family: Lato, sans-serif; }
.scrollbar { width: 12px; flex: none; background: #d0d0d0; padding: 3px 3px 0; }
.scrollbar i { display: block; width: 6px; height: 348px; border-radius: 3px; background: #85898a; }

.ddg-head { height: 135px; background: #161616; border-bottom: 1px solid #2c2c2c; position: relative; }
.ddg-head-top { display: flex; align-items: flex-start; padding: 23px 0 0 121px; }
.ddg-logo { width: 44px; height: 44px; margin-top: 7px; }
.ddg-search {
  width: 786px; height: 58px; margin-left: 42px; background: #333; border-radius: 4px; display: flex; align-items: center;
  padding: 0 19px 3px 15px; font-size: 21px; color: #ddd; justify-content: space-between;
  box-shadow: 0 1px 2px rgba(0,0,0,.4);
}
.search-ico { width: 25px; height: 25px; margin-top: 4px; }
.ddg-tools { display: flex; align-items: center; margin-left: auto; padding: 19px 21px 0 0; color: #ccc; }
.tool-priv { font-size: 19px; }
.tool-chev { width: 15px; height: 10px; margin-left: 9px; color: #ccc; }
.tool-mega { width: 34px; height: 22px; margin-left: 34px; }
.tool-chev2 { margin-left: 9px; }
.tool-menu { width: 21px; height: 16px; margin-left: 40px; }
.ddg-nav { display: flex; margin-left: 223px; width: 753px; gap: 19px; margin-top: 8px; font-size: 19.200px; color: #bbb; font-weight: 700; height: 46px; }
.dn { height: 46px; padding-top: 8px; }
.dn.active { color: #eee; border-bottom: 1px solid #eee; }
.dn-settings { margin-left: auto; display: flex; align-items: flex-start; gap: 13px; }
.dn-settings .fl-caret { margin-top: 10px; }

.ddg-body { display: flex; align-items: flex-start; }
.results { width: 1064px; flex: none; padding-left: 224px; padding-right: 60px; }
.filters { height: 70px; margin-bottom: 17px; display: flex; align-items: center; font-size: 19.200px; color: #aaa; }
.toggle { width: 42px; height: 21px; border-radius: 11px; background: #333; display: flex; align-items: center; padding-left: 2px; margin-right: 11px; }
.toggle i { width: 16px; height: 16px; border-radius: 50%; background: #ccc; }
.fl { display: flex; align-items: center; gap: 12px; margin-right: 38px; }
.fl-strong { color: #ddd; font-weight: 700; letter-spacing: .2px; }
.fl-caret { width: 10px; height: 6px; color: #bbb; }

.result { margin-bottom: 44px; }
.r-title {
  margin: 0; font-size: 24.800px; font-weight: 400; line-height: 30px; color: #ececec;
  text-decoration: underline; text-decoration-thickness: 1px; text-underline-offset: 3px; white-space: nowrap;
}
.r-url { display: flex; align-items: center; gap: 10px; font-size: 18.800px; color: #d8d8d8; height: 26px; margin-top: 3px; white-space: nowrap; }
.fav { width: 21px; height: 21px; }
.r-snip { margin: 6px 0 0; font-size: 19px; line-height: 28px; color: #b8b8b8; white-space: nowrap; }
.r-snip b { font-weight: 700; color: #cfcfcf; letter-spacing: -.25px; }

.side { width: 622px; flex: none; margin-top: 68px; }
.card { background: #282828; border-radius: 5px; height: 416px; padding: 19px 30px 0 30px; box-shadow: 0 1px 3px rgba(0,0,0,.3); }
.card-title { margin: 0; font-size: 32px; font-weight: 400; -webkit-text-stroke: .3px #eee; line-height: 46px; color: #eee; }
.card-sub { font-size: 18.500px; color: #aaa; line-height: 22px; margin-top: 0; }
.code {
  margin: 29px 0 0; background: #222; border-radius: 4px; height: 187px; padding: 10px; font: 19.200px/27.700px "DejaVu Sans Mono", monospace; color: #c6c6c6;
}
.c-pre { color: #8c8c8c; }
.c-str { color: #99c794; }
.c-kw { color: #c594c5; }
.c-num { color: #f9914b; }
.card-desc { margin: 11px 0 0; font-size: 19.200px; line-height: 24px; color: #bbb; }
.card-more { display: flex; align-items: center; gap: 9px; margin-top: 24px; font-size: 18.600px; color: #ddd; }
.card-gh { width: 22px; height: 22px; color: #1c1c1c; }
.side-fb { width: 592px; text-align: right; margin-top: 9px; font-size: 16.700px; color: #555; }
.side-fb span { text-decoration: underline; }
.fb-btn {
  position: absolute; left: 1670px; top: 1010px; width: 168px; height: 37px; background: #2a2a2a; border: 0; border-radius: 4px;
  color: #666; font: 700 20px Lato, sans-serif;
}
```
